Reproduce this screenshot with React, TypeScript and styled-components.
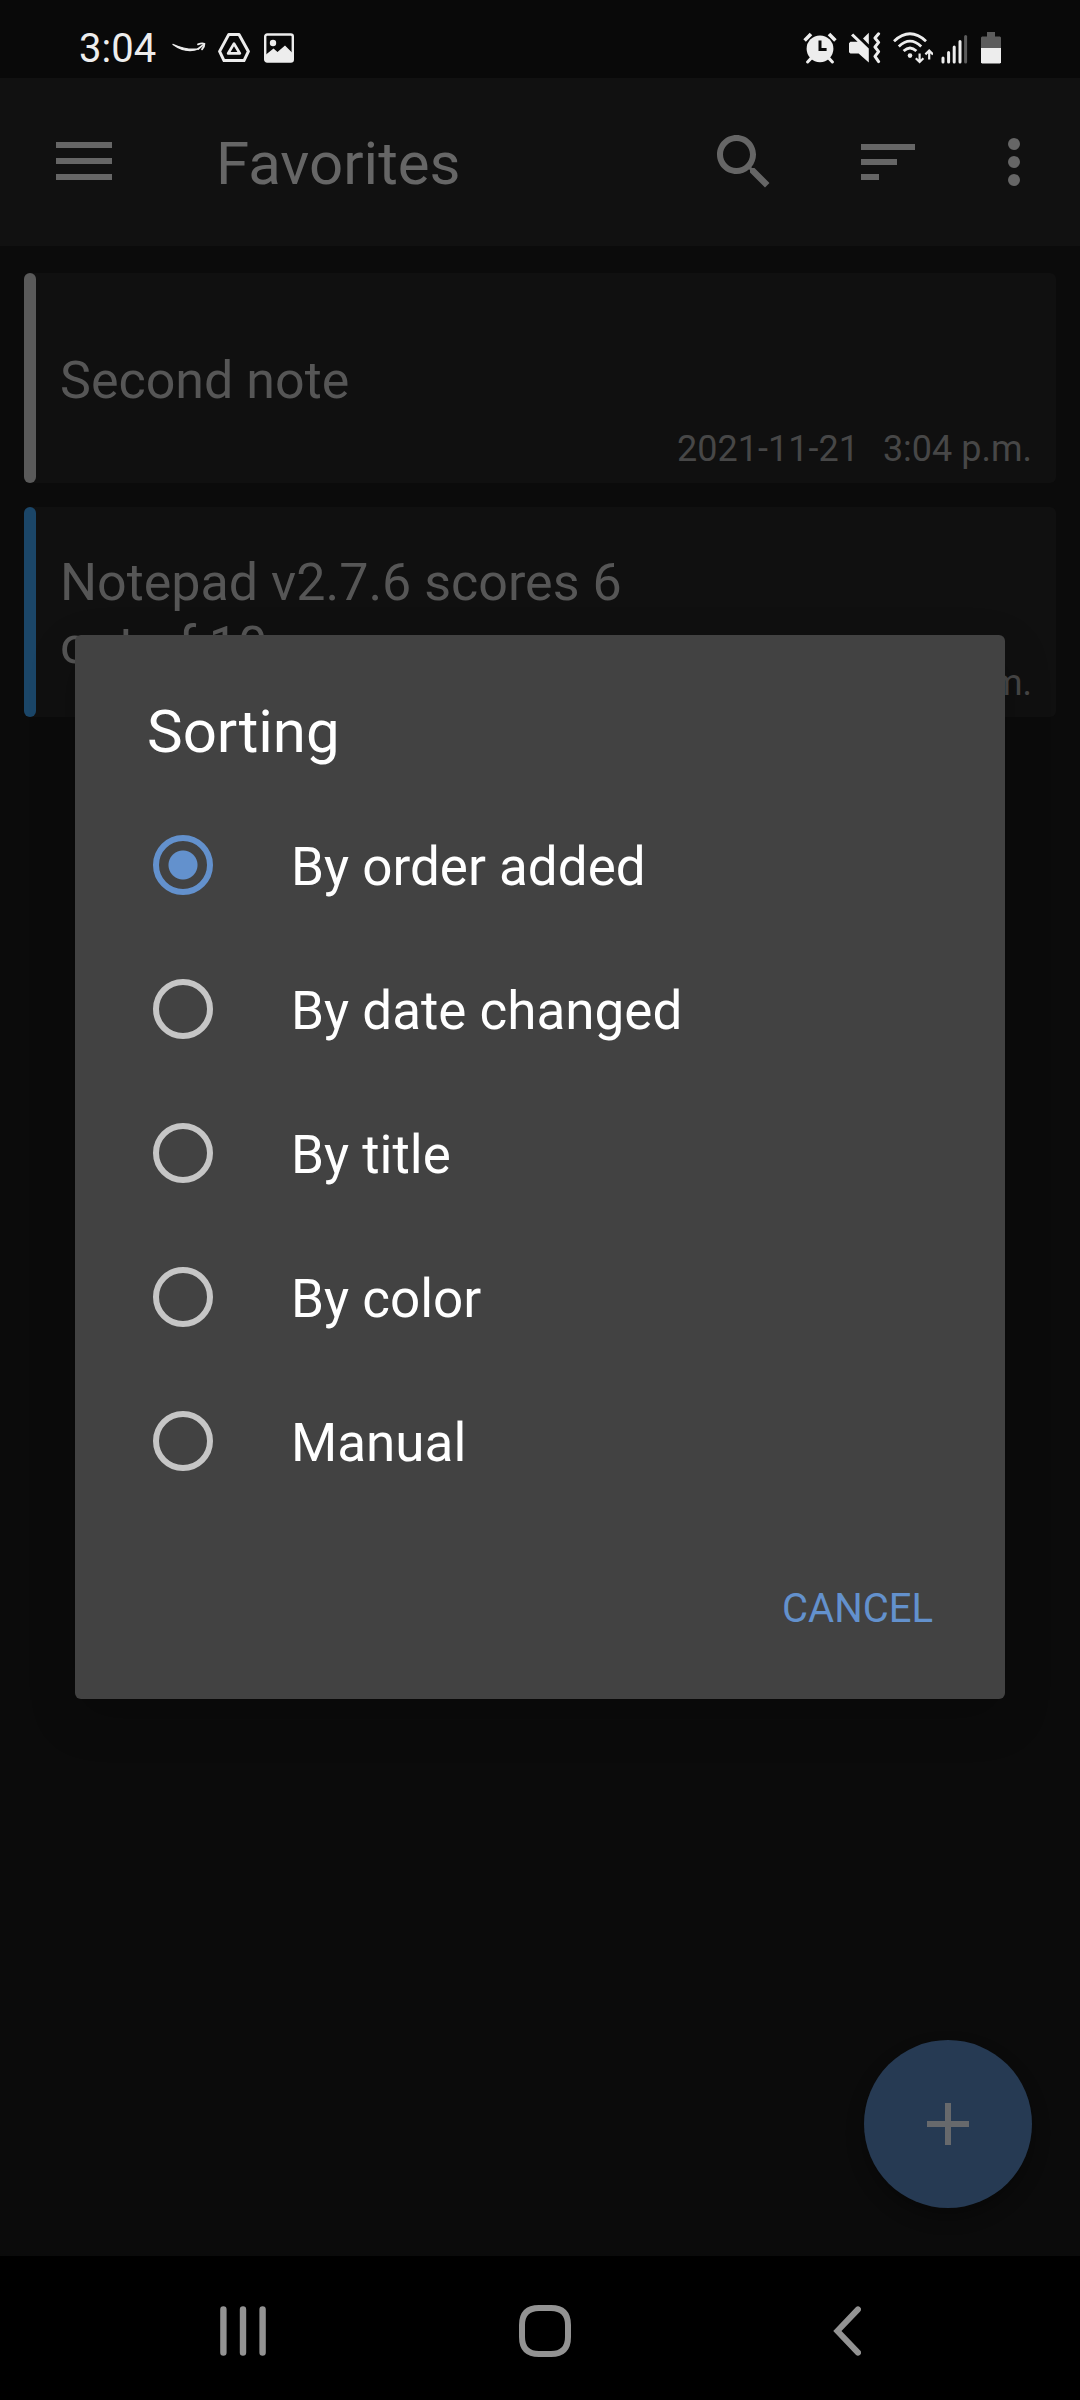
import React, { useState } from "react";
import styled, { createGlobalStyle } from "styled-components";

const GlobalStyle = createGlobalStyle`
  *, *::before, *::after { box-sizing: border-box; }
  body { margin: 0; background: #0b0b0b; }
  button, input { font: inherit; margin: 0; }
  svg { display: block; flex: none; }
`;

const Screen = styled.div`
  display: flex;
  flex-direction: column;
  min-height: 100vh;
  background: #0b0b0b;
  font-family: Roboto, "Noto Sans", sans-serif;
`;

const StatusBar = styled.header`
  display: flex;
  align-items: center;
  justify-content: space-between;
  height: 78px;
  padding: 18px 79px 0;
  background: #090909;
  color: #ededed;
`;

const StatusGroup = styled.div<{ $gap: number }>`
  display: flex;
  align-items: center;
  gap: ${(p) => p.$gap}px;
`;

const Clock = styled.time`
  font-size: 40px;
  line-height: 48px;
  padding: 2px 4px 0 0;
`;

const Workspace = styled.div`
  position: relative;
  display: flex;
  flex: 1;
  flex-direction: column;
`;

const AppBar = styled.div`
  display: flex;
  align-items: center;
  height: 168px;
  padding-right: 12px;
  background: #111111;
  color: #666666;
`;

const IconButton = styled.button<{ $width?: number }>`
  display: flex;
  align-items: center;
  justify-content: center;
  width: ${(p) => p.$width ?? 144}px;
  height: 144px;
  padding: 0;
  border: 0;
  background: none;
  color: inherit;
`;

const PageTitle = styled.h1`
  flex: 1;
  margin: 0;
  padding: 4px 0 0 48px;
  font-size: 60px;
  font-weight: 400;
  line-height: 70px;
`;

const NoteList = styled.ul`
  display: flex;
  flex-direction: column;
  gap: 24px;
  margin: 0;
  padding: 27px 24px;
  list-style: none;
`;

const NoteCard = styled.li`
  display: flex;
  min-height: 210px;
  border-radius: 6px;
  background: #101010;
`;

const NoteStripe = styled.span<{ $color: string }>`
  width: 12px;
  border-radius: 6px;
  background: ${(p) => p.$color};
`;

const NoteTitle = styled.h2`
  flex: 1;
  align-self: center;
  margin: 0;
  padding: 4px 24px 0;
  color: #565656;
  font-size: 52px;
  font-weight: 400;
  line-height: 63px;
`;

const NoteDate = styled.p`
  display: flex;
  align-self: flex-end;
  gap: 24px;
  margin: 0;
  padding: 0 24px 13px 0;
  color: #474747;
  font-size: 36px;
  line-height: 42px;
  white-space: nowrap;
`;

const AddButton = styled.button`
  display: flex;
  align-items: center;
  justify-content: center;
  align-self: flex-end;
  width: 168px;
  height: 168px;
  margin: auto 48px 48px;
  padding: 0;
  border: 0;
  border-radius: 50%;
  background: #263a53;
  color: #67696c;
  box-shadow: 0 9px 18px rgba(0, 0, 0, 0.3);
`;

const Overlay = styled.div`
  position: absolute;
  inset: 0;
  display: flex;
  align-items: center;
  padding: 0 75px;
`;

const Dialog = styled.section`
  flex: 1;
  padding: 60px 0 20px;
  border-radius: 6px;
  background: #424242;
  color: #ffffff;
  box-shadow: 0 18px 48px rgba(0, 0, 0, 0.2);
`;

const DialogTitle = styled.h2`
  margin: 0;
  padding: 2px 72px 26px;
  font-size: 60px;
  font-weight: 400;
  line-height: 70px;
`;

const Options = styled.fieldset`
  display: flex;
  flex-direction: column;
  min-width: 0;
  margin: 0;
  padding: 0;
  border: 0;
`;

const Option = styled.label`
  display: flex;
  align-items: center;
  gap: 78px;
  height: 144px;
  padding: 0 78px;
  font-size: 53px;
  line-height: 62px;
`;

const OptionText = styled.span`
  padding-top: 4px;
`;

const Radio = styled.input`
  appearance: none;
  flex: none;
  width: 60px;
  height: 60px;
  padding: 9px;
  border: 6px solid #c6c6c6;
  border-radius: 50%;

  &:checked {
    border-color: #6391cd;
    background: radial-gradient(circle, #6391cd 14px, transparent 15px);
  }
`;

const DialogActions = styled.div`
  display: flex;
  justify-content: flex-end;
  padding: 22px 48px 0;
`;

const TextButton = styled.button`
  height: 144px;
  padding: 4px 24px 0;
  border: 0;
  background: none;
  color: #6391cd;
  font-size: 40px;
  line-height: 48px;
  text-transform: uppercase;
`;

const NavBar = styled.nav`
  display: grid;
  grid-template-columns: repeat(3, 1fr);
  justify-items: center;
  height: 144px;
  padding: 6px 82px 0 92px;
  background: #000000;
  color: #939393;
`;

const NavButton = styled(IconButton)`
  height: 138px;
`;

const SmileIcon = () => (
  <svg width="34" height="32" viewBox="0 0 34 32" fill="none" stroke="currentColor" strokeLinecap="round">
    <path d="M0.6 12.2Q14 22 27 16.8Q15 18.6 0.6 12.2Z" fill="currentColor" strokeWidth="1.2" />
    <path d="M26 12.4Q30 10.6 32.4 11.8Q32.6 14.4 30 17.4" strokeWidth="1.8" />
    <path d="M26 17L31.5 12.6" strokeWidth="1.8" />
  </svg>
);

const DriveIcon = () => (
  <svg width="34" height="32" viewBox="0 0 34 32" fill="none" stroke="currentColor" strokeWidth="3" strokeLinejoin="round">
    <path d="M10.8 2.4H21L30.4 19.4L26 28.6H6L1.6 19.4Z" />
    <path d="M16 11.6L21.8 21.4H10.2Z" strokeWidth="2.8" />
  </svg>
);

const PictureIcon = () => (
  <svg width="30" height="30" viewBox="0 0 30 30">
    <rect x="1.2" y="1.5" width="27.6" height="27" rx="2" fill="none" stroke="currentColor" strokeWidth="2.4" />
    <circle cx="9" cy="10" r="3.2" fill="currentColor" />
    <path d="M2 21.5L9.5 15.5L13.5 19L21 12.5L28 19.5V28H2Z" fill="currentColor" />
  </svg>
);

const AlarmIcon = () => (
  <svg width="38" height="32" viewBox="0 0 38 32" fill="none" stroke="currentColor" strokeWidth="3.6">
    <circle cx="17" cy="16.8" r="13.4" fill="currentColor" stroke="none" />
    <path d="M1.6 8.4L8 2M26 2L32.4 8.4" />
    <path d="M8 26.4L4.6 30M26 26.4L29.4 30" strokeLinecap="round" strokeWidth="3" />
    <path d="M17 8.4V17.4H23.6" stroke="#090909" strokeWidth="3" />
  </svg>
);

const VibrateIcon = () => (
  <svg width="36" height="32" viewBox="0 0 36 32" fill="none" stroke="currentColor">
    <path d="M1.4 9.8H8.6L2 3.6L4.2 1.6L19.8 16.4V30.6L9.6 21.6H1.4L0 20.2V11.2Z" fill="currentColor" stroke="none" />
    <path d="M14 6.6L19.8 .8V12.4Z" fill="currentColor" stroke="none" />
    <path
      d="M29.6 1.8L26 6L29.6 10.4L26 15L29.6 19.6L26 24.4L29.6 29.6"
      strokeWidth="3"
      strokeLinejoin="round"
      strokeLinecap="round"
    />
  </svg>
);

const WifiIcon = () => (
  <svg width="40" height="32" viewBox="0 0 40 32" fill="none" stroke="currentColor" strokeWidth="2.8">
    <path d="M1 9.2Q17 -5.6 33 9.2" />
    <path d="M5.8 14.4Q17 3.8 28.2 14.4" />
    <path d="M10.6 19Q17 12.8 23.4 19" />
    <circle cx="17" cy="23.6" r="2.3" fill="currentColor" stroke="none" />
    <path d="M26.6 21.4V30M22.8 26.2L26.6 30L30.4 26.2" strokeWidth="2.2" />
    <path d="M36.2 27.6V18.8M32.4 22.4L36.2 18.6L40 22.4" strokeWidth="2.2" />
  </svg>
);

const SignalIcon = () => (
  <svg width="32" height="32" viewBox="0 0 32 32" stroke="currentColor" strokeWidth="3" strokeLinecap="round">
    <path d="M2 26V30M7.6 20.6V30M13.2 15V30M19 9.4V30" />
    <path d="M24.6 4.4V30" stroke="#5c5c5c" />
  </svg>
);

const BatteryIcon = () => (
  <svg width="20" height="32" viewBox="0 0 20 32">
    <path d="M6 0H14V4.4H19L20 5.4V16H0V5.4L1 4.4H6Z" fill="#5c5c5c" />
    <path d="M0 16H20V30.6L19 31.6H1L0 30.6Z" fill="currentColor" />
  </svg>
);

const MenuIcon = () => (
  <svg width="56" height="40" viewBox="0 0 56 40" fill="currentColor">
    <path d="M0 0H56V6H0ZM0 16H56V22H0ZM0 32H56V38H0Z" />
  </svg>
);

const SearchIcon = () => (
  <svg width="72" height="72" viewBox="0 0 24 24" fill="currentColor">
    <path d="M15.5 14h-.79l-.28-.27C15.41 12.59 16 11.11 16 9.5 16 5.91 13.09 3 9.5 3S3 5.91 3 9.5 5.91 16 9.5 16c1.61 0 3.09-.59 4.23-1.57l.27.28v.79l5 4.99L20.49 19l-4.99-5zm-6 0C7.01 14 5 11.99 5 9.5S7.01 5 9.5 5 14 7.01 14 9.5 11.99 14 9.5 14z" />
  </svg>
);

const SortIcon = () => (
  <svg width="72" height="72" viewBox="0 0 24 24" fill="currentColor">
    <path d="M3 18h6v-2H3v2zM3 6v2h18V6H3zm0 7h12v-2H3v2z" />
  </svg>
);

const MoreIcon = () => (
  <svg width="72" height="72" viewBox="0 0 24 24" fill="currentColor">
    <circle cx="12" cy="6" r="2" />
    <circle cx="12" cy="12" r="2" />
    <circle cx="12" cy="18" r="2" />
  </svg>
);

const PlusIcon = () => (
  <svg width="42" height="42" viewBox="0 0 42 42" fill="currentColor">
    <path d="M18 0H24V18H42V24H24V42H18V24H0V18H18Z" />
  </svg>
);

const RecentsIcon = () => (
  <svg width="46" height="50" viewBox="0 0 46 50" stroke="currentColor" strokeWidth="6.4" strokeLinecap="round">
    <path d="M3.4 3.4V46.6M23 3.4V46.6M42.6 3.4V46.6" />
  </svg>
);

const HomeIcon = () => (
  <svg width="52" height="52" viewBox="0 0 52 52" fill="none" stroke="currentColor" strokeWidth="6">
    <path d="M20 3H32Q49 3 49 20V32Q49 49 32 49H20Q3 49 3 32V20Q3 3 20 3Z" />
  </svg>
);

const BackIcon = () => (
  <svg width="28" height="50" viewBox="0 0 28 50" fill="none" stroke="currentColor" strokeWidth="6" strokeLinecap="round">
    <path d="M25 3.4L4.4 25L25 46.6" />
  </svg>
);

const notes = [
  { title: "Second note", color: "#5a5a5a", date: "2021-11-21", time: "3:04 p.m." },
  { title: "Notepad v2.7.6 scores 6 out of 10", color: "#1b4668", date: "2021-11-21", time: "3:03 p.m." },
];

const sortOptions = ["By order added", "By date changed", "By title", "By color", "Manual"];

export default function App() {
  const [sorting, setSorting] = useState(sortOptions[0]);

  return (
    <Screen>
      <GlobalStyle />
      <StatusBar>
        <StatusGroup $gap={12}>
          <Clock>3:04</Clock>
          <SmileIcon />
          <DriveIcon />
          <PictureIcon />
        </StatusGroup>
        <StatusGroup $gap={8}>
          <AlarmIcon />
          <VibrateIcon />
          <WifiIcon />
          <SignalIcon />
          <BatteryIcon />
        </StatusGroup>
      </StatusBar>

      <Workspace>
        <AppBar>
          <IconButton $width={168} aria-label="Open menu">
            <MenuIcon />
          </IconButton>
          <PageTitle>Favorites</PageTitle>
          <IconButton aria-label="Search">
            <SearchIcon />
          </IconButton>
          <IconButton aria-label="Sort">
            <SortIcon />
          </IconButton>
          <IconButton $width={108} aria-label="More options">
            <MoreIcon />
          </IconButton>
        </AppBar>

        <NoteList>
          {notes.map((note) => (
            <NoteCard key={note.title}>
              <NoteStripe $color={note.color} />
              <NoteTitle>{note.title}</NoteTitle>
              <NoteDate>
                <time>{note.date}</time>
                <time>{note.time}</time>
              </NoteDate>
            </NoteCard>
          ))}
        </NoteList>

        <AddButton aria-label="Add note">
          <PlusIcon />
        </AddButton>

        <Overlay>
          <Dialog role="dialog" aria-modal="true" aria-labelledby="sorting-title">
            <DialogTitle id="sorting-title">Sorting</DialogTitle>
            <Options aria-labelledby="sorting-title">
              {sortOptions.map((option) => (
                <Option key={option}>
                  <Radio
                    type="radio"
                    name="sorting"
                    value={option}
                    checked={sorting === option}
                    onChange={() => setSorting(option)}
                  />
                  <OptionText>{option}</OptionText>
                </Option>
              ))}
            </Options>
            <DialogActions>
              <TextButton type="button">Cancel</TextButton>
            </DialogActions>
          </Dialog>
        </Overlay>
      </Workspace>

      <NavBar aria-label="System navigation">
        <NavButton aria-label="Recent apps">
          <RecentsIcon />
        </NavButton>
        <NavButton aria-label="Home">
          <HomeIcon />
        </NavButton>
        <NavButton aria-label="Back">
          <BackIcon />
        </NavButton>
      </NavBar>
    </Screen>
  );
}
